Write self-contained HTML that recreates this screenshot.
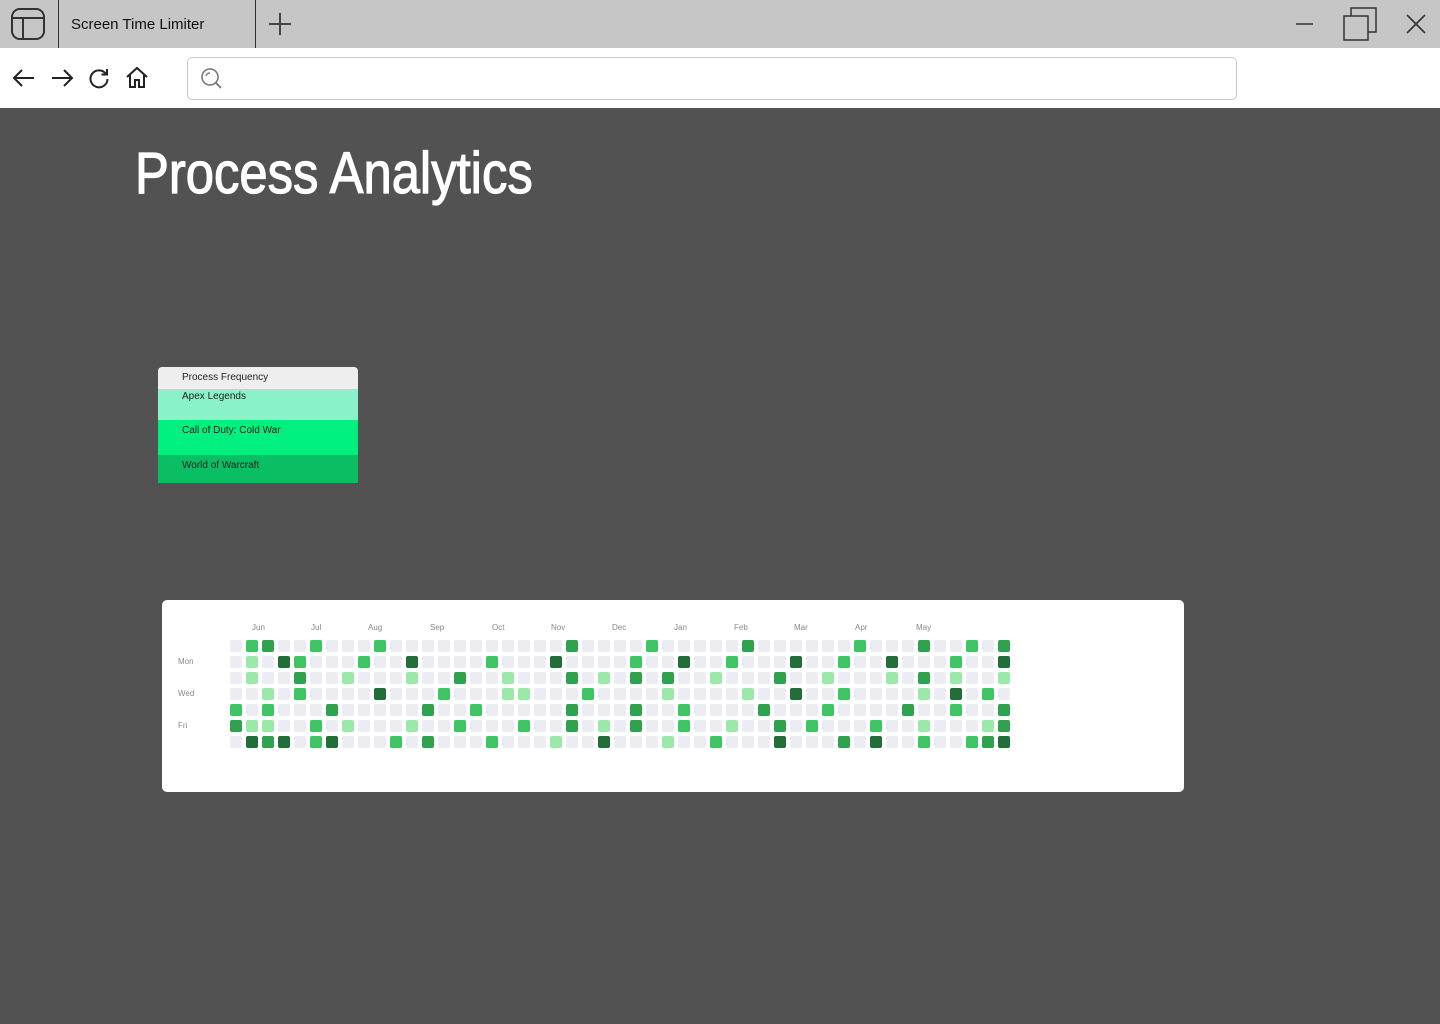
<!DOCTYPE html>
<html><head><meta charset="utf-8"><style>
*{margin:0;padding:0;box-sizing:border-box}
body{width:1440px;height:1024px;overflow:hidden;background:#525252;font-family:"Liberation Sans",sans-serif;position:relative}
.tabbar{position:absolute;left:0;top:0;width:1440px;height:48px;background:#c6c6c6}
.tab{position:absolute;left:58px;top:0;width:198px;height:48px;border-left:1px solid #333;border-right:1px solid #333;font-size:15px;color:#111;padding:16px 0 0 12px}
.nav{position:absolute;left:0;top:48px;width:1440px;height:60px;background:#fff}
.search{position:absolute;left:187px;top:9px;width:1050px;height:43px;border:1px solid #c8c8c8;border-radius:5px}
h1{position:absolute;left:135px;top:140px;font-size:58px;font-weight:normal;color:#fff;transform:scaleX(.875);transform-origin:left top;-webkit-text-stroke:1.2px #fff}
.legend{position:absolute;left:158px;top:367px;width:200px;height:116px;overflow:hidden;border-radius:4px 4px 0 0;font-size:10px;color:#222}
.legend div{padding:5px 0 0 24px}
.card{position:absolute;left:162px;top:600px;width:1022px;height:192px;background:#fff;border-radius:5px}
.m{position:absolute;top:23px;font-size:8px;color:#888}
.d{position:absolute;left:16px;font-size:8px;color:#888}
.c{position:absolute;width:12px;height:12px;border-radius:2px}
</style></head><body>
<div class="tabbar">
<svg style="position:absolute;left:10px;top:7px" width="36" height="34" viewBox="0 0 36 34"><rect x="2" y="2" width="32" height="30" rx="8" fill="none" stroke="#333" stroke-width="2"/><line x1="2" y1="11" x2="34" y2="11" stroke="#333" stroke-width="2"/><line x1="13" y1="11" x2="13" y2="32" stroke="#333" stroke-width="2"/></svg>
<div class="tab">Screen Time Limiter</div>
<svg style="position:absolute;left:268px;top:12px" width="24" height="24"><path d="M12 1V23M1 12H23" stroke="#444" stroke-width="2"/></svg>
<svg style="position:absolute;left:1296px;top:22px" width="18" height="4"><path d="M0 2H17" stroke="#333" stroke-width="1.5"/></svg>
<svg style="position:absolute;left:1343px;top:7px" width="36" height="34"><rect x="1" y="9" width="24" height="24" fill="none" stroke="#333" stroke-width="1.5"/><path d="M8 9V1H33V25H25" fill="none" stroke="#333" stroke-width="1.5"/></svg>
<svg style="position:absolute;left:1406px;top:14px" width="20" height="20"><path d="M1 1L19 19M19 1L1 19" stroke="#333" stroke-width="1.6"/></svg>
</div>
<div class="nav">
<svg style="position:absolute;left:12px;top:20px" width="24" height="20"><path d="M22 10H2M10 2L2 10L10 18" fill="none" stroke="#222" stroke-width="2"/></svg>
<svg style="position:absolute;left:50px;top:20px" width="24" height="20"><path d="M2 10H22M14 2L22 10L14 18" fill="none" stroke="#222" stroke-width="2"/></svg>
<svg style="position:absolute;left:88px;top:19px" width="22" height="22"><path d="M18 7A8.5 8.5 0 1 0 19.5 12M19 2V7.5H13.5" fill="none" stroke="#222" stroke-width="2"/></svg>
<svg style="position:absolute;left:125px;top:18px" width="24" height="24"><path d="M2 11L12 2L22 11M5 9V21H10V14H14V21H19V9" fill="none" stroke="#222" stroke-width="2"/></svg>
<div class="search"><svg style="position:absolute;left:12px;top:9px" width="24" height="24"><circle cx="10" cy="10" r="8" fill="none" stroke="#777" stroke-width="1.6"/><path d="M6 9A4 4 0 0 1 10 6" fill="none" stroke="#777" stroke-width="1.4"/><path d="M16 16L21 21" stroke="#777" stroke-width="1.8"/></svg></div>
</div>
<h1>Process Analytics</h1>
<div class="legend">
<div style="height:22px;background:#eeeeee">Process Frequency</div>
<div style="height:31px;background:#8af2c8;padding-top:2px">Apex Legends</div>
<div style="height:35px;background:#00f07f">Call of Duty: Cold War</div>
<div style="height:28px;background:#0abf63">World of Warcraft</div>
</div>
<div class="card" id="card">
<div class="m" style="left:90px">Jun</div><div class="m" style="left:149px">Jul</div><div class="m" style="left:206px">Aug</div><div class="m" style="left:268px">Sep</div><div class="m" style="left:330px">Oct</div><div class="m" style="left:389px">Nov</div><div class="m" style="left:450px">Dec</div><div class="m" style="left:512px">Jan</div><div class="m" style="left:572px">Feb</div><div class="m" style="left:632px">Mar</div><div class="m" style="left:693px">Apr</div><div class="m" style="left:754px">May</div>
<div class="d" style="top:57px">Mon</div><div class="d" style="top:89px">Wed</div><div class="d" style="top:121px">Fri</div>
</div>
<script>
var S=[
{1:2,2:3,5:2,9:2,21:3,26:2,32:3,39:2,43:3,46:2,48:3},
{1:1,3:4,4:2,8:2,11:4,16:2,20:4,25:2,28:4,31:2,35:4,38:2,41:4,45:2,48:4},
{1:1,4:3,7:1,11:1,14:3,17:1,21:3,23:1,25:3,27:3,30:1,34:3,37:1,41:1,43:3,45:1,48:1},
{2:1,4:2,9:4,13:2,17:1,18:1,22:2,27:1,32:1,35:4,38:2,43:1,45:4,47:2},
{0:2,2:2,6:3,12:3,15:2,21:3,25:3,28:2,33:3,37:2,42:3,45:2,48:3},
{0:3,1:1,2:1,5:2,7:1,11:1,14:2,18:2,21:3,23:1,25:3,28:2,31:1,34:3,36:2,40:2,43:1,47:1,48:3},
{1:4,2:3,3:4,5:2,6:4,10:2,12:3,16:2,20:1,23:4,27:1,30:2,34:4,38:3,40:4,43:2,46:2,47:3,48:4}];
var col=["#ebedf0","#9be9a8","#40c463","#30a14e","#216e39"];
var card=document.getElementById('card'),h='';
for(var r=0;r<7;r++)for(var c=0;c<49;c++){h+='<div class="c" style="left:'+(68+16*c)+'px;top:'+(40+16*r)+'px;background:'+col[S[r][c]||0]+'"></div>';}
card.insertAdjacentHTML('beforeend',h);
</script>
</body></html>
